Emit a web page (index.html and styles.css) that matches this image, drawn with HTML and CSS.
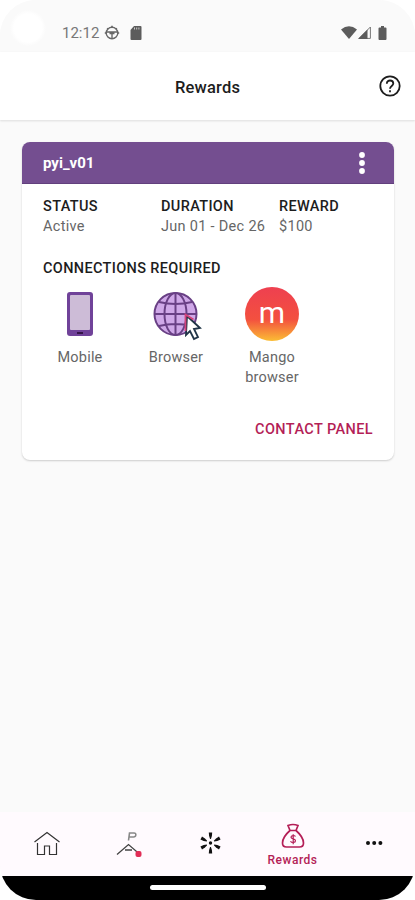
FILE: index.html
```html
<!doctype html>
<html lang="en">
<head>
    <meta charset="UTF-8">
    <meta name="viewport" content="width=device-width, initial-scale=1.0">
    <title>Rewards</title>
    <link rel="stylesheet" href="styles.css">
</head>
<body>
<div class="screen">
    <div class="status-bar">
        <div class="status-left">
            <span class="time">12:12</span>
            <svg class="wheel" width="16" height="16" viewBox="0 0 16 16" fill="none" stroke="#666" stroke-width="1.4">
                <circle cx="8" cy="8" r="5.8"/>
                <path d="M2.5 7h11M8 8v6M5.5 8.5h5"/>
                <path d="M8 .8v2M.8 8h2M13.2 8h2M3.2 3.2l1 1M12.8 3.2l-1 1" stroke-width="1.6"/>
            </svg>
            <svg width="12" height="14" viewBox="0 0 12 14">
                <path d="M4 0h6.500q1 0 1 1v12q0 1-1 1h-9q-1 0-1-1V4z" fill="#5c5c5c"/>
                <path d="M4.500 1.500v2M6.700 1.500v2M8.900 1.500v2" stroke="#ccc" stroke-width="1"/>
            </svg>
        </div>
        <div class="status-right">
            <svg width="16" height="13" viewBox="0 0 16 13">
                <path d="M0 3.500Q8-3 16 3.500L8 13z" fill="#5c5c5c"/>
            </svg>
            <svg class="signal" width="13" height="13" viewBox="0 0 13 13">
                <path d="M12.400 1v11.400H1z" fill="#fafafa" stroke="#777" stroke-width="1"/>
                <path d="M9.500 3.500V13H0z" fill="#5c5c5c"/>
            </svg>
            <svg class="battery" width="9" height="14" viewBox="0 0 9 14">
                <path d="M3 0h3v1.500h1.500q1 0 1 1V13q0 1-1 1h-6q-1 0-1-1V2.500q0-1 1-1H3z" fill="#5c5c5c"/>
            </svg>
        </div>
    </div>

    <header class="header">
        <h1>Rewards</h1>
        <svg class="help" width="22" height="22" viewBox="0 0 22 22" fill="none" stroke="#1d1d1d" stroke-width="1.800">
            <circle cx="11" cy="11" r="9.700"/>
            <path d="M7.800 8.700C7.800 4.200 14.300 4.700 14.300 8.500c0 2.400-3.300 2.500-3.300 5.200"/>
            <path d="M11 15.300v2"/>
        </svg>
    </header>

    <main class="content">
        <section class="card">
            <div class="card-header">
                <h2>pyi_v01</h2>
                <svg width="6" height="24" viewBox="0 0 6 24" fill="#fff">
                    <circle cx="3" cy="4" r="2.900"/>
                    <circle cx="3" cy="12" r="2.900"/>
                    <circle cx="3" cy="20" r="2.900"/>
                </svg>
            </div>
            <div class="card-body">
                <dl class="details">
                    <div><dt>STATUS</dt><dd>Active</dd></div>
                    <div><dt>DURATION</dt><dd>Jun 01 - Dec 26</dd></div>
                    <div><dt>REWARD</dt><dd>$100</dd></div>
                </dl>
                <h3>CONNECTIONS REQUIRED</h3>
                <ul class="connections">
                    <li>
                        <svg width="54" height="54" viewBox="0 0 54 54">
                            <rect x="14" y="5" width="26" height="44" rx="3" fill="#704299"/>
                            <rect x="17" y="8" width="20" height="35" rx="1" fill="#cdbcd7"/>
                            <path d="M24 46h6" stroke="#351448" stroke-width="2"/>
                        </svg>
                        <span>Mobile</span>
                    </li>
                    <li>
                        <svg width="54" height="54" viewBox="0 0 54 54" fill="none">
                            <circle cx="26.500" cy="27" r="21" fill="#cfa8e8"/>
                            <g stroke="#694085" stroke-width="2">
                                <circle cx="26.500" cy="27" r="21"/>
                                <ellipse cx="26.500" cy="27" rx="11" ry="21"/>
                                <path d="M26.500 6v42M6 27h41M10 15q16.500 4 33 0M10 39q16.500-4 33 0"/>
                            </g>
                            <path d="M38 29l13 12-6 1 4 8-4 2-4-8-4 4z" fill="#fff" stroke="#203547" stroke-width="1.800"/>
                            <path d="M36.500 44V27.500l8 5" stroke="#d5437b" stroke-width="1.800"/>
                        </svg>
                        <span>Browser</span>
                    </li>
                    <li>
                        <div class="mango">m</div>
                        <span>Mango<br>browser</span>
                    </li>
                </ul>
                <a class="contact">CONTACT PANEL</a>
            </div>
        </section>
    </main>

    <nav class="tabs">
        <a class="tab">
            <svg width="28" height="28" viewBox="0 0 28 28" fill="none" stroke="#333" stroke-width="1.200">
                <path d="M1.500 12L14 2.500 26.500 12M4.500 13v11.500h7V16h5v8.500h7V13"/>
            </svg>
        </a>
        <a class="tab">
            <svg width="28" height="28" viewBox="0 0 28 28" fill="none" stroke="#444" stroke-width="1.300">
                <path d="M2 24.500l11.500-10L25 24.500M10 20h7"/>
                <path d="M13.500 10.500l1-7.500H19q2 0 1.800 2t-2.300 2H14" stroke="#888" stroke-width="1.600"/>
                <rect x="20.500" y="21" width="6" height="6" rx="2" fill="#e12d57" stroke="none"/>
            </svg>
        </a>
        <a class="tab">
            <svg width="28" height="28" viewBox="0 0 28 28" fill="#111">
                <g transform="translate(-.5 -1)">
                    <circle cx="14" cy="14" r="1.700"/>
                    <path id="ray" d="M12.300 3.500h3.400l-.3 3.500-1 3h-.8l-1-3z"/>
                    <use href="#ray" transform="rotate(62 14 14)"/>
                    <use href="#ray" transform="rotate(118 14 14)"/>
                    <use href="#ray" transform="rotate(180 14 14)"/>
                    <use href="#ray" transform="rotate(242 14 14)"/>
                    <use href="#ray" transform="rotate(298 14 14)"/>
                </g>
            </svg>
        </a>
        <a class="tab active">
            <svg width="24" height="26" viewBox="0 0 24 26" fill="none" stroke="#b41f57" stroke-width="1.700">
                <path d="M7 2.500q5-2 10 0l-2 5H9zM9 7.500C5 11 1.500 16 1.500 20q0 4 4 4h13q4 0 4-4c0-4-3.500-9-7.500-12.500z"/>
                <path d="M14.500 13.500c-1-1.500-4.500-1.300-4.500.7 0 2.200 4.500 1.200 4.500 3.600 0 2.200-4 2.200-5 .5M12.200 11.300v10" stroke-width="1.200"/>
            </svg>
            <span>Rewards</span>
        </a>
        <a class="tab">
            <svg width="18" height="6" viewBox="0 0 18 6" fill="#111">
                <circle cx="2" cy="2" r="2"/>
                <circle cx="8.200" cy="2" r="2"/>
                <circle cx="14.400" cy="2" r="2"/>
            </svg>
        </a>
    </nav>
    <div class="gesture-bar"><div class="handle"></div></div>
</div>
</body>
</html>
```
FILE: styles.css
```css
* {
    margin: 0;
    padding: 0;
    box-sizing: border-box;
}

body {
    background: #fff;
    font-family: Roboto, "Liberation Sans", sans-serif;
    color: #1d1d1d;
}

svg {
    display: block;
}

ul {
    list-style: none;
}

.screen {
    display: flex;
    flex-direction: column;
    width: 415px;
    height: 900px;
    background: #fafafa;
    border-radius: 36px;
    overflow: hidden;
}

.status-bar {
    display: flex;
    justify-content: space-between;
    height: 52px;
    padding: 13px 28px 0 62px;
    background: radial-gradient(circle at 28px 28px, #fff 14px, #fafafa 18px);
}

.status-left,
.status-right {
    display: flex;
    align-items: center;
    height: 39px;
}

.time {
    width: 42px;
    font-size: 15px;
    color: #777;
}

.wheel {
    margin-right: 10px;
}

.signal {
    margin: 0 7px 0 1px;
}

.header {
    display: flex;
    align-items: center;
    justify-content: flex-end;
    height: 68px;
    padding-right: 14px;
    background: #fff;
    box-shadow: 0 1px 2px #ddd;
}

.header h1 {
    flex: 1;
    padding: 2px 0 0 36px;
    text-align: center;
    font-size: 16.5px;
    font-weight: 500;
    letter-spacing: 0.2px;
}

.content {
    flex: 1;
    padding: 22px 21px 0 22px;
}

.card {
    height: 318px;
    background: #fff;
    border-radius: 8px;
    box-shadow: 0 1px 2px #ccc;
    overflow: hidden;
}

.card-header {
    display: flex;
    align-items: center;
    justify-content: space-between;
    height: 42px;
    padding: 0 29px 0 21px;
    background: #744e90;
    border-bottom: 1px solid #62407d;
    color: #fff;
}

.card-header h2 {
    font-size: 15px;
    font-weight: 700;
}

.card-body {
    display: flex;
    flex-direction: column;
    padding: 12px 21px 0;
}

.details {
    display: grid;
    grid-template-columns: 118px 118px 1fr;
    line-height: 21px;
    white-space: nowrap;
}

.details dt,
.card-body h3 {
    font-size: 14.5px;
    font-weight: 500;
    letter-spacing: 0.35px;
}

.details dd {
    margin-top: -1px;
    font-size: 14.5px;
    letter-spacing: 0.3px;
    color: #666;
}

.card-body h3 {
    margin-top: 21px;
    line-height: 22px;
}

.connections {
    display: flex;
    margin: 7px 0 0 -11px;
}

.connections li {
    display: flex;
    flex-direction: column;
    align-items: center;
    width: 96px;
    font-size: 14.5px;
    line-height: 20px;
    letter-spacing: 0.2px;
    text-align: center;
    color: #666;
}

.connections span {
    margin-top: 7px;
}

.mango {
    width: 54px;
    height: 54px;
    border-radius: 50%;
    background: linear-gradient(#ee4050, #f3503f 60%, #fbbd34);
    color: #fff;
    font: 400 30px/51px Roboto, sans-serif;
}

.contact {
    align-self: flex-end;
    margin-top: 32px;
    font-size: 14.5px;
    font-weight: 500;
    line-height: 20px;
    letter-spacing: 0.4px;
    color: #b41f57;
}

.tabs {
    display: grid;
    grid-template-columns: repeat(5, 82px);
    justify-content: center;
    height: 64px;
    padding-left: 6px;
    background: #fffafe;
}

.tab {
    display: flex;
    flex-direction: column;
    align-items: center;
    justify-content: center;
}

.active {
    padding-top: 3px;
}

.active span {
    margin-top: 2px;
    font-size: 12px;
    font-weight: 500;
    line-height: 18px;
    letter-spacing: 0.5px;
    color: #b41f57;
}

.gesture-bar {
    display: flex;
    justify-content: center;
    height: 24px;
    padding-top: 9px;
    background: #000;
}

.handle {
    width: 116px;
    height: 5px;
    border-radius: 3px;
    background: #fff;
}
```
